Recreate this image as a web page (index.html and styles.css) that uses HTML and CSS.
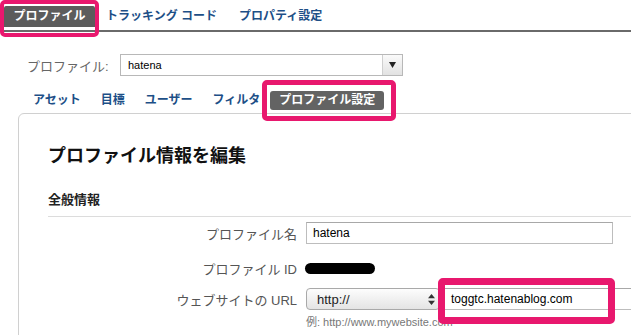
FILE: index.html
```html
<!DOCTYPE html>
<html lang="ja">
<head>
<meta charset="utf-8">
<title>プロファイル設定</title>
<link rel="stylesheet" href="styles.css">
</head>
<body>
<div class="page">
  <nav class="topnav">
    <a class="tab active">プロファイル</a>
    <a class="tab">トラッキング コード</a>
    <a class="tab">プロパティ設定</a>
  </nav>

  <div class="profile-row">
    <span class="profile-label">プロファイル:</span>
    <div class="profile-select">
      <span class="profile-value">hatena</span>
      <span class="profile-btn"><svg width="7" height="6" viewBox="0 0 7 6"><path d="M0 0H7L3.5 6Z" fill="#222"/></svg></span>
    </div>
  </div>

  <div class="subtabs">
    <a class="subtab">アセット</a>
    <a class="subtab">目標</a>
    <a class="subtab">ユーザー</a>
    <a class="subtab">フィルタ</a>
    <a class="subtab active">プロファイル設定</a>
  </div>

  <section class="panel">
    <h1 class="panel-title">プロファイル情報を編集</h1>
    <h2 class="section-title">全般情報</h2>
    <div class="form">
      <div class="row row-name">
        <span class="label">プロファイル名</span>
        <div class="input input-name">hatena</div>
      </div>
      <div class="row row-id">
        <span class="label">プロファイル ID</span>
        <span class="redacted"></span>
      </div>
      <div class="row row-url">
        <span class="label">ウェブサイトの URL</span>
        <div class="scheme-select">
          <span>http://</span>
          <svg width="7" height="11" viewBox="0 0 7 11"><path d="M3.5 0L7 4.2H0Z M3.5 11L0 6.8H7Z" fill="#333"/></svg>
        </div>
        <div class="input input-url">toggtc.hatenablog.com</div>
      </div>
      <div class="hint">例: http://www.mywebsite.com</div>
    </div>
  </section>

  <div class="mark mark-tab"></div>
  <div class="mark mark-subtab"></div>
  <div class="mark mark-url"></div>
</div>
</body>
</html>
```

FILE: styles.css
```css
html, body {
  margin: 0;
  padding: 0;
  background: #fff;
}
body {
  font-family: "Liberation Sans", "Noto Sans CJK JP", sans-serif;
  overflow: hidden;
}
.page {
  position: relative;
  width: 631px;
  height: 335px;
  overflow: hidden;
}

/* top navigation */
.topnav {
  display: flex;
  align-items: flex-end;
  padding: 6px 0 3px 4px;
  border-bottom: 2px solid #6a6a6a;
}
.tab {
  font-size: 12px;
  font-weight: bold;
  line-height: 21px;
  color: #1d4f87;
  padding: 0 11px;
  white-space: nowrap;
}
.tab.active {
  background: #5c5c5c;
  color: #fff;
  padding: 0 9.5px;
  border-radius: 2px 2px 0 0;
}

/* profile selector */
.profile-row {
  display: flex;
  align-items: center;
  height: 22px;
  margin-top: 22px;
  padding-left: 27px;
}
.profile-label {
  width: 93px;
  font-size: 13px;
  color: #666;
}
.profile-select {
  display: flex;
  box-sizing: border-box;
  width: 283px;
  height: 22px;
  border: 1px solid #b8b8b8;
  background: #fff;
}
.profile-value {
  flex: 1;
  font-size: 11px;
  line-height: 20px;
  padding-left: 7px;
  color: #000;
}
.profile-btn {
  width: 19px;
  display: flex;
  align-items: center;
  justify-content: center;
  border-left: 1px solid #cfcfcf;
  background: linear-gradient(#fafafa, #e2e2e2);
}

/* sub tabs */
.subtabs {
  display: flex;
  align-items: center;
  height: 19px;
  margin-top: 15px;
  padding-left: 23px;
}
.subtab {
  font-size: 12px;
  font-weight: bold;
  line-height: 19px;
  color: #1d4f87;
  padding: 0 10px;
  white-space: nowrap;
}
.subtab.active {
  background: #636363;
  color: #fff;
  padding: 0 9px;
  border-radius: 3px;
}

/* panel */
.panel {
  box-sizing: border-box;
  width: 700px;
  height: 400px;
  margin: 3px 0 0 18px;
  padding: 29px 0 0 29px;
  border: 1px solid #d0d0d0;
  border-radius: 6px 0 0 0;
}
.panel-title {
  margin: 0;
  font-size: 18px;
  line-height: 26px;
  font-weight: bold;
  color: #111;
}
.section-title {
  margin: 21px 0 0;
  font-size: 13px;
  line-height: 20px;
  font-weight: bold;
  color: #222;
  padding-bottom: 6px;
  border-bottom: 1px solid #dcdcdc;
}

/* form */
.form {
  padding-top: 5px;
}
.row {
  display: flex;
  align-items: center;
  height: 22px;
}
.row-id {
  margin-top: 13px;
}
.row-url {
  margin-top: 9px;
}
.label {
  width: 249px;
  margin-right: 9px;
  text-align: right;
  font-size: 13px;
  color: #555;
  white-space: nowrap;
}
.input {
  box-sizing: border-box;
  height: 22px;
  border: 1px solid #bdbdbd;
  border-top-color: #a8a8a8;
  font-size: 12px;
  line-height: 20px;
  color: #000;
  background: #fff;
}
.input-name {
  width: 307px;
  padding-left: 6px;
}
.redacted {
  width: 70px;
  height: 11px;
  margin-left: -1px;
  background: #000;
  border-radius: 6px;
}
.scheme-select {
  box-sizing: border-box;
  width: 134px;
  height: 22px;
  display: flex;
  align-items: center;
  justify-content: space-between;
  padding: 0 4px 0 10px;
  border: 1px solid #a9a9a9;
  border-radius: 4px;
  background: linear-gradient(#fdfdfd, #e4e4e4);
  font-size: 13px;
  color: #222;
}
.input-url {
  width: 200px;
  margin-left: 2px;
  padding-left: 8px;
}
.hint {
  margin: 4px 0 0 258px;
  font-size: 11px;
  line-height: 16px;
  color: #777;
}

/* annotation marks */
.mark {
  position: absolute;
  box-sizing: border-box;
  border: 4px solid #e8186e;
  border-radius: 5px;
}
.mark-tab {
  left: 0;
  top: 0;
  width: 99px;
  height: 37px;
}
.mark-subtab {
  left: 262px;
  top: 80px;
  width: 134px;
  height: 41px;
  border-width: 5px;
}
.mark-url {
  left: 438px;
  top: 278px;
  width: 177px;
  height: 46px;
  border-width: 7px;
}
```
